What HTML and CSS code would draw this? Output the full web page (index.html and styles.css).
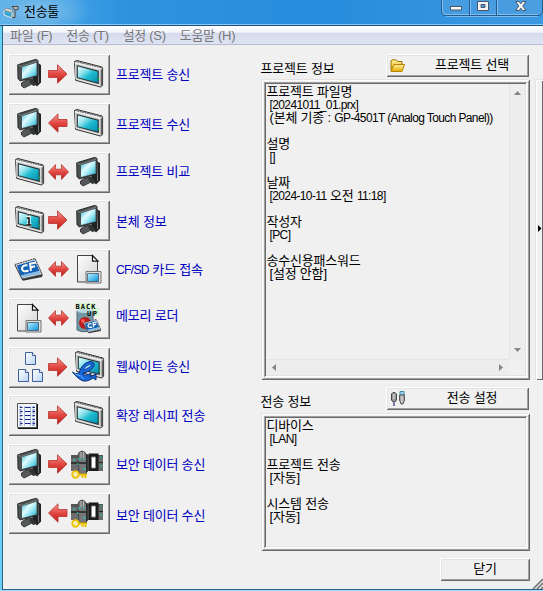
FILE: index.html
```html
<!DOCTYPE html>
<html lang="ko">
<head>
<meta charset="utf-8">
<title>전송툴</title>
<link rel="stylesheet" href="styles.css">
</head>
<body>
<svg class="defs" width="0" height="0">
  <defs>
    <linearGradient id="glass" x1="0" y1="0" x2="1" y2="1"><stop offset="0" stop-color="#f0ffff"/><stop offset=".3" stop-color="#9be6ef"/><stop offset=".55" stop-color="#22bdd2"/><stop offset="1" stop-color="#0088a8"/></linearGradient>
    <linearGradient id="glass2" x1="0" y1="0" x2="1" y2="1"><stop offset="0" stop-color="#35bdd5"/><stop offset=".4" stop-color="#e2fbff"/><stop offset=".65" stop-color="#8be0ee"/><stop offset="1" stop-color="#10a8c8"/></linearGradient>
    <linearGradient id="red" x1="0" y1="0" x2="0" y2="1"><stop offset="0" stop-color="#f49a94"/><stop offset=".5" stop-color="#e34842"/><stop offset="1" stop-color="#b81d18"/></linearGradient>
    <linearGradient id="paper" x1="0" y1="0" x2="1" y2="1"><stop offset="0" stop-color="#fff"/><stop offset="1" stop-color="#d2d2d2"/></linearGradient>
    <linearGradient id="bpaper" x1="0" y1="0" x2="1" y2="1"><stop offset="0" stop-color="#fff"/><stop offset="1" stop-color="#b9d5f5"/></linearGradient>
    <linearGradient id="mini" x1="0" y1="0" x2="1" y2="1"><stop offset="0" stop-color="#b5efff"/><stop offset="1" stop-color="#0a92dc"/></linearGradient>
    <linearGradient id="gold" x1="0" y1="0" x2="0" y2="1"><stop offset="0" stop-color="#fff2a0"/><stop offset="1" stop-color="#e8a800"/></linearGradient>
    <g id="monitor">
      <path d="M19 3 24 6V23.500L20 27.500 15 22Z" fill="#1f2324"/>
      <path d="M21.500 6V24" stroke="#777" stroke-width="1"/>
      <path d="M4.500 24 9 21 14 20 15 25 7 29 4.500 27Z" fill="#55595a" stroke="#222" stroke-width=".8"/>
      <path d="M15 19 20 26 16 27 12 22Z" fill="#333"/>
      <path d="M.7 5.800 18.500.4 21 1.300V17L3.200 22 1 19.500Z" fill="#4b5051" stroke="#1d2020" stroke-width=".9"/>
      <path d="M1 6 4.500 7.500 20.500 1.800" fill="none" stroke="#7e8485" stroke-width=".9"/>
      <path d="M5 8.300 19.500 3.800V16.200L5 20Z" fill="url(#glass2)"/>
    </g>
    <g id="panel">
      <path d="M.5 1.500 3 .5 28 7 28.600 8.200V25.500L26.500 27 1.600 20.300Z" fill="#c4c4c4" stroke="#333" stroke-width="1"/>
      <path d="M.8 2.600 26.500 9.200" fill="none" stroke="#eee" stroke-width="1.800"/>
      <path d="M1 1.400 27.500 7.700" fill="none" stroke="#555" stroke-width="1" stroke-dasharray="1.500 1"/>
      <path d="M1.800 3.500V19L26 25.500V9.800" fill="none" stroke="#ececec" stroke-width=".9"/>
      <path d="M3.300 5.800 24.200 11.200V23.300L3.300 17.700Z" fill="url(#glass)" stroke="#273337" stroke-width="1.100"/>
      <path d="M27.500 9.500V25.500" stroke="#606060" stroke-width="1.600"/>
      <path d="M24 19.500h1.500" stroke="#00e020" stroke-width="1"/>
    </g>
    <path id="right" d="M.5 6.500H9.500V.8L19 10 9.500 19.200V13.500H.5Z" fill="url(#red)" stroke="#b7322e" stroke-width=".8"/>
    <path id="left" d="M19 6.500H10V.8L.5 10 10 19.200V13.500H19Z" fill="url(#red)" stroke="#b7322e" stroke-width=".8"/>
    <path id="both" d="M.5 8 7.500.6V5.200H13.500V.6L20.500 8 13.500 15.400V10.800H7.500V15.400Z" fill="url(#red)" stroke="#b7322e" stroke-width=".8"/>
    <g id="doc">
      <path d="M.5.500H15.500L20.500 6V27H.5Z" fill="url(#paper)" stroke="#444"/>
      <path d="M15.500.500V6.200H21Z" fill="#fff" stroke="#111" stroke-width="1.200"/>
      <path d="M9 16.500H24V28H9Z" fill="#e0e0e0" stroke="#666" stroke-width=".9"/>
      <path d="M10.500 18.500H21.500V26.500H10.500Z" fill="url(#mini)" stroke="#345" stroke-width=".7"/>
    </g>
    <g id="page"><path d="M.5.500H7.500L10.500 3.500V12.500H.5Z" fill="url(#bpaper)" stroke="#3f5f98"/><path d="M7.500.500V3.500H10.500" fill="#fff" stroke="#3f5f98"/></g>
    <g id="card">
      <path d="M.8 7.500 21 .8 28.500 17 28 19 9 22.800 7.500 21Z" fill="#333"/>
      <path d="M.8 6.500 21 .5 28.300 16.500 8.300 21Z" fill="#c9cfd5" stroke="#444" stroke-width="1" stroke-dasharray="2 .7"/>
      <path d="M3 7.500 20.500 2.500 25.500 13 6.500 17.500Z" fill="#1262b5"/>
      <path d="M7 17.500 25 13 26.500 15.500 8 19.500Z" fill="#82b9e7"/>
      <path d="M13.500 7.200Q8 6.800 8 11 9.200 14.800 14.500 12.500M17 12.800 16 5.800 22 4.600M16.600 9.300 21 8.300" fill="none" stroke="#fff" stroke-width="2"/>
    </g>
    <g id="plc">
      <path d="M0 4H32V20H0Z" fill="#6b6d6d"/>
      <path d="M0 4H32V7H0Z" fill="#555"/>
      <path d="M7 4 8 1.500 11 0 14 1.500 15.500 4V23H8Z" fill="#777" stroke="#444"/>
      <path d="M10 1V7M12.500 1V7" stroke="#ccc" stroke-width=".8"/>
      <path d="M0 12H15M16 3V21" stroke="#222" stroke-width="1.400"/>
      <path d="M17.500 2.500H27.500V20H17.500Z" fill="#1b1b1b"/>
      <path d="M20.500 6H24.500V17H20.500Z" fill="#fff" stroke="#888"/>
      <path d="M2 9h2M7 8h3M6 13h2M12 8h2M29 6h2M29 15h2M12 18h3" stroke="#19d7c9" stroke-width="1.200"/>
      <path d="M28 11.500h4" stroke="#222"/>
      <circle cx="4.500" cy="23.500" r="3.300" fill="#f6f0b0" stroke="#ecc200" stroke-width="1.800"/>
      <path d="M8 23.500H16M11.500 24v3M14.500 24v3" stroke="#ecc200" stroke-width="2"/>
    </g>
  </defs>
</svg>
<div class="window">
  <header class="titlebar">
    <svg class="appicon" width="16" height="14" viewBox="0 0 16 14"><path d="M1 5 9 7.500V13L1 10Z" fill="#35a6d0" stroke="#e3e3e3"/><path d="M1 5 3 3 10 5 9 7.500Z" fill="#ddd" stroke="#555" stroke-width=".5"/><path d="M9 12.500H12V5.500M9 1.500 12 5 15 4.500V1.500Z" fill="#bbb" stroke="#454545"/></svg>
    <span class="title">전송툴</span>
    <div class="controls">
      <svg width="102" height="17" viewBox="0 0 102 17"><path d="M.5 0V11Q.5 15.500 5 15.500H97Q101.500 15.500 101.500 11V0" fill="#60a8e0" fill-opacity=".4" stroke="#245d91"/><path d="M1.500 0V11Q1.500 14.500 5 14.500H97M5 16.500H97M29.500 0V14M56.500 0V14" fill="none" stroke="#9accf2" stroke-opacity=".7"/><path d="M28.500 0V15M55.500 0V15" stroke="#245d91"/><path d="M9.500 6.500H20.500V10H9.500Z" fill="#f8f8f8" stroke="#4c5464"/><path d="M36.500 1.500H47.500V10.500H36.500ZM40 4.500V7.500H44V4.500Z" fill="#f4f4f4" fill-rule="evenodd" stroke="#4c5464"/><path d="M74.500 1.500H78L79.800 3.800 81.500 1.500H85L81.800 6 85 10.500H81.500L79.800 8.200 78 10.500H74.500L77.800 6Z" fill="#f4f4f4" stroke="#4c5464"/></svg>
    </div>
  </header>
  <nav class="menu"><span>파일 (F)</span><span>전송 (T)</span><span>설정 (S)</span><span>도움말 (H)</span></nav>
  <main class="client">
    <section class="actions">
      <div class="row"><button class="btn tool"><svg width="102" height="41"><use href="#monitor" x="9" y="5"/><use href="#right" x="40" y="10"/><use href="#panel" x="66" y="6"/></svg></button><span>프로젝트 송신</span></div>
      <div class="row"><button class="btn tool"><svg width="102" height="41"><use href="#monitor" x="9" y="5"/><use href="#left" x="40" y="10"/><use href="#panel" x="66" y="6"/></svg></button><span class="down">프로젝트 수신</span></div>
      <div class="row"><button class="btn tool"><svg width="102" height="41"><use href="#panel" x="7" y="6"/><use href="#both" x="40" y="12"/><use href="#monitor" x="68" y="5"/></svg></button><span>프로젝트 비교</span></div>
      <div class="row"><button class="btn tool"><svg width="102" height="41"><use href="#panel" x="7" y="6"/><path d="M18.500 17.500h2.500v7M18 25h5.500M19.500 14.500h2" fill="none" stroke="#fff" stroke-width="3.200"/><path d="M18.500 18h2.500v6.500M18 25h5.500M19.500 14.800h2" fill="none" stroke="#111" stroke-width="1.600"/><use href="#right" x="40" y="10"/><use href="#monitor" x="68" y="5"/></svg></button><span class="mid">본체 정보</span></div>
      <div class="row"><button class="btn tool"><svg width="102" height="41"><use href="#card" x="6" y="9"/><use href="#both" x="40" y="12"/><use href="#doc" x="69" y="6"/></svg></button><span><i>CF/SD</i> 카드 접속</span></div>
      <div class="row"><button class="btn tool"><svg width="102" height="41"><use href="#doc" x="9" y="6"/><use href="#both" x="40" y="12"/><path d="M68 5H87V10H91V18H79V11H68Z" fill="#d2f5cc"/><path d="M69 13H85V31Q77 36 69 32Z" fill="#7297a5" stroke="#526b76"/><ellipse cx="77" cy="13" rx="8" ry="2" fill="#b5d5df"/><circle cx="77" cy="25" r="6" fill="#b91c1c"/><circle cx="75" cy="23" r="2" fill="#ff5a50"/><g transform="translate(75 21) scale(.63)"><use href="#card"/></g><text class="pixel" x="67.500" y="11" textLength="20">BACK</text><text class="pixel" x="79" y="17.500" textLength="10">UP</text></svg></button><span class="high">메모리 로더</span></div>
      <div class="row"><button class="btn tool"><svg width="102" height="41"><use href="#page" x="17" y="5"/><use href="#page" x="10" y="22"/><use href="#page" x="24" y="22"/><use href="#right" x="40" y="10"/><use href="#panel" x="67" y="4"/><path d="M64.500 25Q67 28 71 26 74 16 82 14.500 88 15 85.500 20 82 25 74.500 26.500 77 30 83 26L82 30 88 27V33L85 31Q78 36 73 33 69 31 64.500 25Z" fill="#1768dc" stroke="#092e72"/><path d="M75 23Q78 18 83 17 84 20 75 23Z" fill="#a8efff" stroke="#092e72" stroke-width=".7"/><path d="M67 27Q73 28 76 32" stroke="#71b8ff" fill="none"/></svg></button><span>웹싸이트 송신</span></div>
      <div class="row"><button class="btn tool"><svg width="102" height="41"><path d="M10 9H30V34H10Z" fill="#111"/><path d="M9.500 8.500H28.500V32.500H9.500Z" fill="#f2f5fa" stroke="#555"/><path d="M12.500 11V31M25.500 11V31" stroke="#8fa9cf" stroke-width="2" stroke-dasharray="2 1"/><path d="M16.500 11V31M22.500 11V31" stroke="#a9bede" stroke-width="1"/><path d="M12 12.500H14.500M17 12.500H22.500M24.500 12.500H27M12 16.500H14.500M17 16.500H22.500M24.500 16.500H27M12 20.500H14.500M17 20.500H22.500M24.500 20.500H27M12 24.500H14.500M17 24.500H22.500M24.500 24.500H27M12 28.500H14.500M17 28.500H22.500M24.500 28.500H27" stroke="#1c2390" stroke-width="1"/><use href="#right" x="40" y="10"/><use href="#panel" x="66" y="6"/></svg></button><span>확장 레시피 전송</span></div>
      <div class="row"><button class="btn tool"><svg width="102" height="41"><use href="#monitor" x="9" y="5"/><use href="#right" x="40" y="10"/><use href="#plc" x="63" y="7"/></svg></button><span>보안 데이터 송신</span></div>
      <div class="row"><button class="btn tool"><svg width="102" height="41"><use href="#monitor" x="9" y="5"/><use href="#left" x="40" y="10"/><use href="#plc" x="63" y="7"/></svg></button><span class="low">보안 데이터 수신</span></div>
    </section>
    <section class="details">
      <div class="head"><h2>프로젝트 정보</h2><button class="btn wide"><svg width="16" height="14" viewBox="0 0 16 14"><path d="M1 11.500V2L2 .8H6L7.500 2.500H12V5" fill="url(#gold)" stroke="#9c7400"/><path d="M1 12.500 4 5.500H14.500L12 12.500Z" fill="url(#gold)" stroke="#b58400"/></svg><span>프로젝트 선택</span></button></div>
      <div class="frame project"><div class="well">
        <div class="text"><p>프로젝트 파일명</p><p class="val"><i>[20241011_01.prx]</i></p><p class="val">(본체 기종 : <i>GP-4501T (Analog Touch Panel))</i></p><p></p><p>설명</p><p class="val"><i>[]</i></p><p></p><p>날짜</p><p class="val"><i>[2024-10-11</i> 오전 <i>11:18]</i></p><p></p><p>작성자</p><p class="val"><i>[PC]</i></p><p></p><p>송수신용패스워드</p><p class="val">[설정 안함]</p></div>
        <div class="vbar"><svg width="9" height="5"><path d="M1 5 4.500 1 8 5Z" fill="#858585"/></svg><svg width="9" height="5"><path d="M1 0 4.500 4 8 0Z" fill="#858585"/></svg></div>
        <div class="hbar"><svg width="5" height="9"><path d="M5 1 1 4.500 5 8Z" fill="#858585"/></svg><svg width="5" height="9"><path d="M0 1 4 4.500 0 8Z" fill="#858585"/></svg></div>
      </div></div>
      <div class="head second"><h2>전송 정보</h2><button class="btn wide"><svg width="16" height="16" viewBox="0 0 16 16"><path d="M1.500 3 3 1.500H5L6.500 3V9L5 11H3L1.500 9Z" fill="#999" stroke="#444"/><path d="M4 11V15" stroke="#8976b8" stroke-width="2"/><path d="M10 .5H14V4H10Z" fill="#9fd8f1" stroke="#3d8ba9"/><path d="M9.500 4H14.500V9L13 13H11L9.500 9Z" fill="#aaa" stroke="#555"/><path d="M4 3V8M12 5V12" stroke="#ddd"/></svg><span>전송 설정</span></button></div>
      <div class="frame transfer"><div class="well"><div class="text"><p>디바이스</p><p class="val"><i>[LAN]</i></p><p></p><p>프로젝트 전송</p><p class="val">[자동]</p><p></p><p>시스템 전송</p><p class="val">[자동]</p></div></div></div>
      <button class="btn close">닫기</button>
    </section>
    <aside class="splitter"><svg width="4" height="7"><path d="M0 0 3.500 3.500 0 7Z" fill="#000"/></svg></aside>
  </main>
  <svg class="grip" width="11" height="11"><path d="M1 11 11 1M5 11 11 5M9 11 11 9" stroke="#777" stroke-width="1.700"/></svg>
</div>
</body>
</html>
```

FILE: styles.css
```css
* { box-sizing: border-box; }
body {
  margin: 0;
  width: 543px;
  height: 591px;
  overflow: hidden;
  font: 13px/16px "Liberation Sans", "Noto Sans CJK KR", sans-serif;
  color: #000;
}
i { font-style: normal; font-size: 12px; letter-spacing: -.62px; }
.defs { position: absolute; }
.window {
  position: relative;
  height: 591px;
  padding-left: 3px;
  padding-bottom: 2px;
  background: linear-gradient(90deg, #69d0f5 0 2px, #28648a 2px 3px, #f0f0f0 3px);
  border-bottom: 1px solid #9fdcff;
  display: flex;
  flex-direction: column;
}
.window::after {
  content: "";
  position: absolute;
  left: 2px;
  right: 0;
  bottom: 0;
  height: 1px;
  background: #28648a;
}
.titlebar {
  height: 26px;
  margin-left: -3px;
  padding-left: 3px;
  display: flex;
  background: radial-gradient(ellipse 55px 24px at 36px 11px, #82c2ee 0, #68b3e8 45%, transparent 100%), linear-gradient(90deg, #57b4ec, #2f93df 22%, #278cdc 60%, #3d99e1);
  border-bottom: 1px solid #175285;
  box-shadow: inset 0 -1px #8ec8f1;
}
.appicon { margin-top: 5px; }
.title { margin: 4px 0 0 5px; letter-spacing: -.3px; line-height: 15px; }
.controls { margin-left: auto; height: 17px; width: 102px; }
.controls svg, .tool svg { display: block; }
.menu {
  height: 19px;
  flex: none;
  display: flex;
  gap: 14px;
  padding: 2px 0 0 7px;
  color: #777;
  letter-spacing: -.3px;
  background: linear-gradient(#fff 0, #f3f5fb 35%, #d6dcee 40%, #dfe4f3 100%);
  border-bottom: 1px solid #b5bdd3;
}
.client { flex: 1; display: flex; padding: 9px 0 0 5px; min-height: 0; }
.actions { width: 253px; display: flex; flex-direction: column; gap: 7.770px; }
.row { height: 41px; flex: none; display: flex; align-items: center; gap: 6px; color: #0000c0; letter-spacing: -.2px; }
.row span { position: relative; white-space: nowrap; }
.mid { top: 1px; }
.down { top: 2px; }
.high { top: -2px; }
.low { top: 3px; }
.btn {
  padding: 0;
  border: 0;
  background: #f0f0f0;
  font: inherit;
  color: inherit;
  box-shadow: inset 1px 1px #fff, inset -1px -1px #696969, inset 2px 2px #e3e3e3, inset -2px -2px #a0a0a0;
}
.tool { width: 102px; height: 41px; }
.pixel { font: bold 7px "DejaVu Sans Mono", monospace; fill: #000; }
.details { width: 270px; display: flex; flex-direction: column; }
.head { height: 25px; flex: none; display: flex; justify-content: space-between; align-items: flex-start; }
.head h2 { margin: 7px 0 0 0; font: inherit; letter-spacing: -.2px; }
.wide { width: 143px; height: 23px; margin-right: 1px; display: flex; align-items: center; padding-left: 4px; }
.wide span { flex: 1; padding: 0 0 2px 9px; letter-spacing: -.2px; text-align: center; }
.frame {
  flex: none;
  padding: 3px;
  box-shadow: inset 1px 1px #e3e3e3, inset -1px -1px #696969, inset 2px 2px #fff, inset -2px -2px #a0a0a0;
}
.well {
  height: 100%;
  padding: 2px;
  box-shadow: inset 1px 1px #a0a0a0, inset -1px -1px #fff, inset 2px 2px #696969, inset -2px -2px #e3e3e3;
}
.project { height: 301px; }
.project .well { display: grid; grid-template: 1fr 16px / 1fr 16px; }
.text { padding: 1px 0 0 1px; line-height: 13px; white-space: nowrap; min-width: 0; letter-spacing: -.2px; }
.text p { margin: 0; height: 13px; }
.text .val { padding-left: 3px; }
.vbar, .hbar { display: flex; justify-content: space-between; align-items: center; background: #ededed; }
.vbar { flex-direction: column; padding: 6px 0; border-left: 1px solid #e4e4e4; }
.hbar { padding: 0 5px; border-top: 1px solid #e4e4e4; }
.second { margin-top: 7px; height: 26px; }
.transfer { height: 138px; }
.close { width: 90px; height: 23px; margin: 7px 0 0 auto; padding-bottom: 2px; letter-spacing: -.2px; flex: none; }
.splitter {
  width: 8px;
  height: 301px;
  margin: 25px 0 0 5px;
  padding: 146px 0 0 3px;
  box-shadow: inset 1px 1px #e3e3e3, inset 2px 2px #fff, inset -1px -1px #696969;
}
.splitter svg { display: block; }
.grip { position: absolute; right: 0; bottom: 1px; }
```
